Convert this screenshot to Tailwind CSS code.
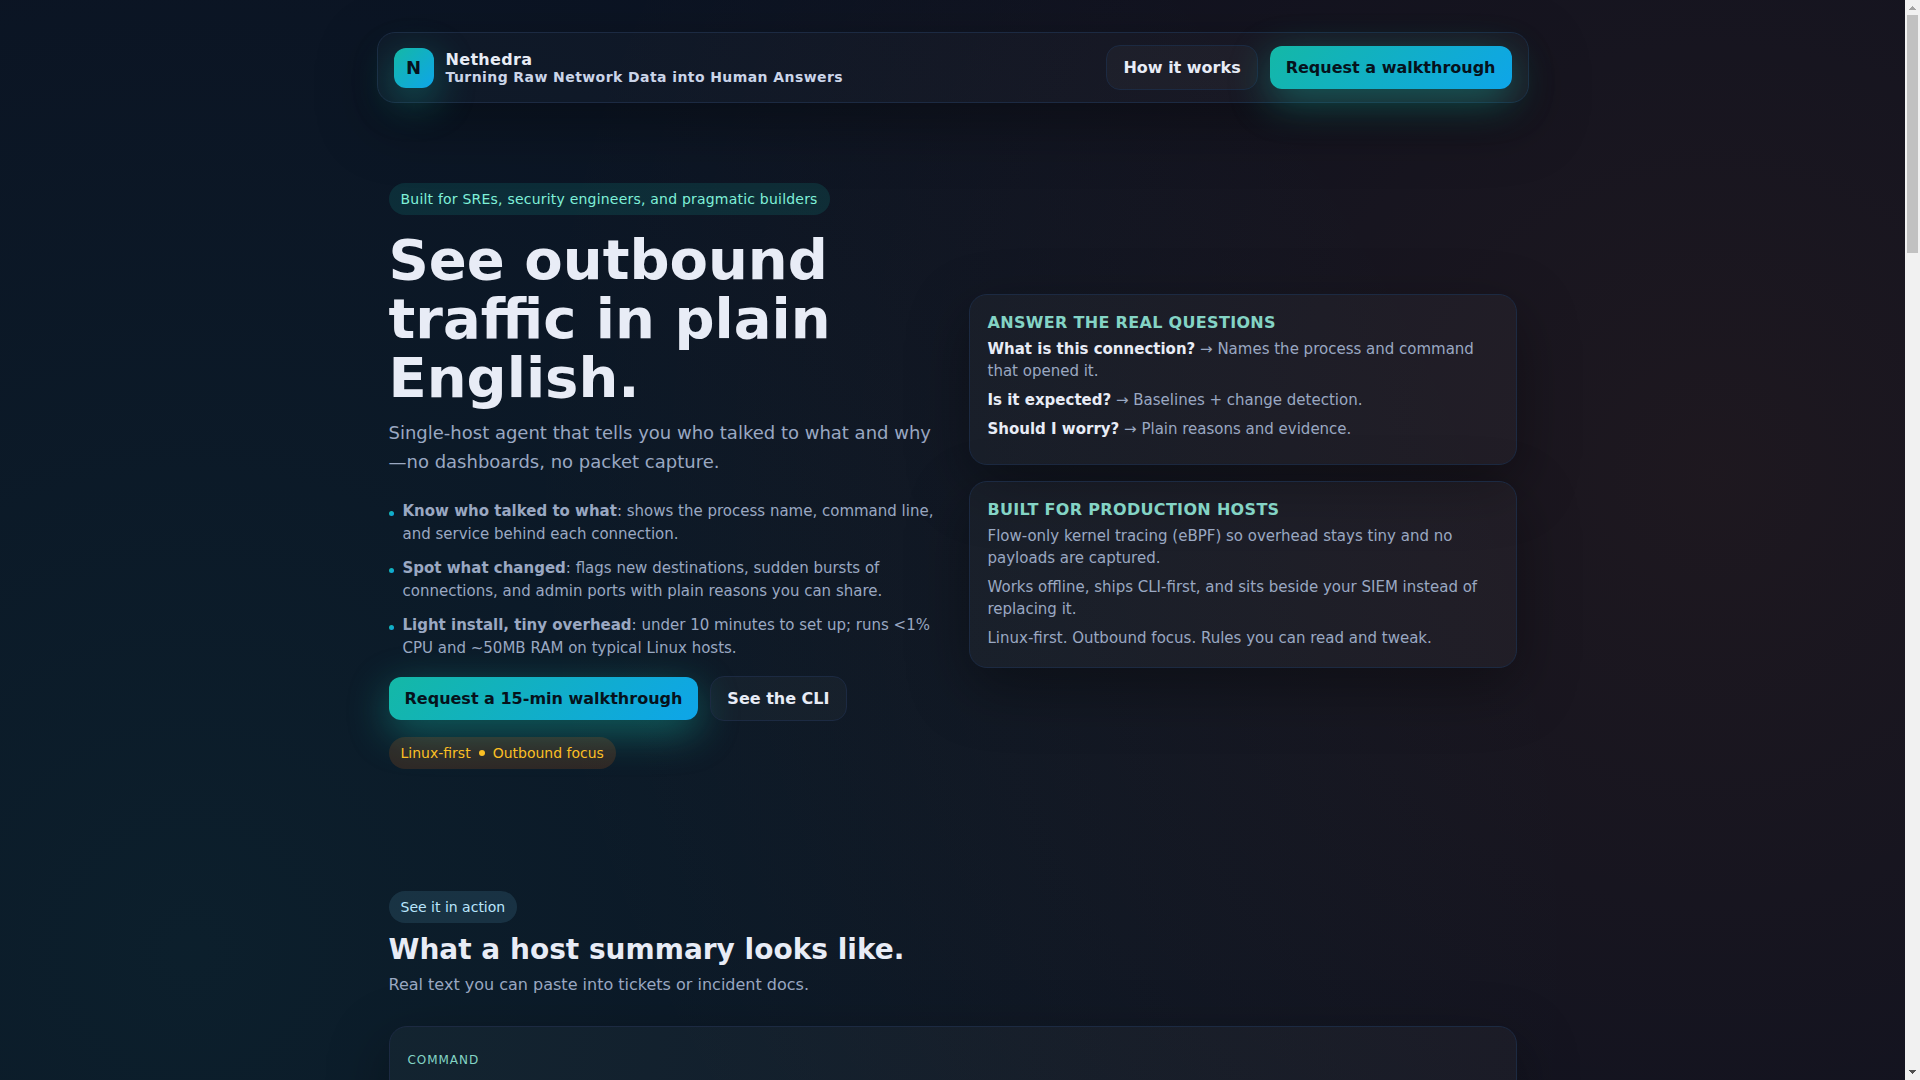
<!DOCTYPE html>
<html lang="en">
<head>
  <meta charset="UTF-8" />
  <meta name="viewport" content="width=device-width, initial-scale=1.0" />
  <title>Nethedra</title>
  <script src="https://cdn.jsdelivr.net/npm/@tailwindcss/browser@4"></script>
</head>
<body class="flex h-screen overflow-hidden bg-[#0b1020] font-['DejaVu_Sans',sans-serif] text-base text-[#e8ecf6]">

  <div class="min-w-0 flex-1 overflow-hidden bg-[radial-gradient(circle_1400px_at_10%_88%,rgba(20,184,166,0.09),rgba(20,184,166,0)),radial-gradient(circle_1200px_at_90%_44%,rgba(249,115,22,0.08),rgba(249,115,22,0))]">
    <div class="mx-auto max-w-[1200px] px-6 pt-8">

      <!-- Top bar -->
      <header class="flex items-center justify-between rounded-[18px] border border-[#1c2a42] bg-white/[0.02] px-4 py-3 shadow-[0_20px_60px_rgba(0,0,0,0.35)]">
        <div class="flex items-center gap-3">
          <div class="grid size-10 place-items-center rounded-xl bg-[linear-gradient(135deg,#14b8a6,#0ea5e9)] text-lg font-bold text-[#06121c] shadow-[0_12px_40px_rgba(20,184,166,0.45)]">N</div>
          <div class="font-bold tracking-[0.02em]">
            <div class="leading-[18px]">Nethedra</div>
            <div class="text-sm leading-4 tracking-[0.03em] text-[#cbd5e9]">Turning Raw Network Data into Human Answers</div>
          </div>
        </div>
        <nav class="flex items-center gap-3">
          <a href="#how" class="rounded-[14px] border border-[#1c2a42] bg-white/[0.03] px-4 py-3 leading-[19px] font-bold">How it works</a>
          <a href="#contact" class="rounded-xl bg-[linear-gradient(135deg,#14b8a6,#0ea5e9)] px-4 py-3 leading-[19px] font-bold text-[#06121c] shadow-[0_12px_40px_rgba(20,184,166,0.45)]">Request a walkthrough</a>
        </nav>
      </header>

      <main class="px-3 pt-6">

        <!-- Hero -->
        <section class="grid grid-cols-2 items-center gap-8 py-14">
          <div class="flex flex-col items-start pb-[10px]">
            <span class="rounded-full bg-[#14b8a6]/15 px-3 py-2 text-sm leading-4 tracking-[0.015em] text-[#7ff0d8]">Built for SREs, security engineers, and pragmatic builders</span>
            <h1 class="mt-[15px] text-[56px] leading-[59px] font-bold">See outbound traffic in plain English.</h1>
            <p class="mt-[11px] text-lg leading-[29px] text-[#9aa8c2]">Single-host agent that tells you who talked to what and why—no dashboards, no packet capture.</p>
            <ul class="mt-6 flex flex-col gap-[11px] text-[15px] leading-[23px] text-[#9aa8c2]">
              <li class="flex gap-[9px]">
                <span class="mt-[11px] size-[5px] shrink-0 rounded-full bg-[linear-gradient(135deg,#14b8a6,#0ea5e9)]"></span>
                <span><strong>Know who talked to what</strong>: shows the process name, command line, and service behind each connection.</span>
              </li>
              <li class="flex gap-[9px]">
                <span class="mt-[11px] size-[5px] shrink-0 rounded-full bg-[linear-gradient(135deg,#14b8a6,#0ea5e9)]"></span>
                <span><strong>Spot what changed</strong>: flags new destinations, sudden bursts of connections, and admin ports with plain reasons you can share.</span>
              </li>
              <li class="flex gap-[9px]">
                <span class="mt-[11px] size-[5px] shrink-0 rounded-full bg-[linear-gradient(135deg,#14b8a6,#0ea5e9)]"></span>
                <span><strong>Light install, tiny overhead</strong>: under 10 minutes to set up; runs &lt;1% CPU and ~50MB RAM on typical Linux hosts.</span>
              </li>
            </ul>
            <div class="mt-4 flex items-center gap-3">
              <a href="#contact" class="rounded-xl bg-[linear-gradient(135deg,#14b8a6,#0ea5e9)] px-4 py-3 leading-[19px] font-bold text-[#06121c] shadow-[0_12px_40px_rgba(20,184,166,0.45)]">Request a 15-min walkthrough</a>
              <a href="#cli" class="rounded-[14px] border border-[#1c2a42] bg-white/[0.03] px-4 py-3 leading-[19px] font-bold">See the CLI</a>
            </div>
            <span class="mt-4 flex items-center gap-2 rounded-full bg-[#f97316]/15 px-3 py-2 text-sm leading-4 text-[#fbbf24]">
              Linux-first
              <span class="size-1.5 rounded-full bg-[#fbbf24]"></span>
              Outbound focus
            </span>
          </div>

          <div class="flex flex-col gap-4">
            <article class="rounded-[18px] border border-[#1c2a42] bg-white/[0.03] px-[18px] pt-[18px] pb-6 shadow-[0_20px_60px_rgba(0,0,0,0.35)]">
              <h3 class="leading-[19px] font-bold tracking-[0.02em] text-[#84d4c5] uppercase">Answer the real questions</h3>
              <div class="mt-1.5 flex flex-col gap-[7px] text-[15px] leading-[22px] text-[#9aa8c2]">
                <p><strong class="text-[#e8ecf6]">What is this connection?</strong> → Names the process and command that opened it.</p>
                <p><strong class="text-[#e8ecf6]">Is it expected?</strong> → Baselines + change detection.</p>
                <p><strong class="text-[#e8ecf6]">Should I worry?</strong> → Plain reasons and evidence.</p>
              </div>
            </article>
            <article class="rounded-[18px] border border-[#1c2a42] bg-white/[0.03] p-[18px] shadow-[0_20px_60px_rgba(0,0,0,0.35)]">
              <h3 class="leading-[19px] font-bold tracking-[0.02em] text-[#84d4c5] uppercase">Built for production hosts</h3>
              <div class="mt-1.5 flex flex-col gap-[7px] text-[15px] leading-[22px] text-[#9aa8c2]">
                <p>Flow-only kernel tracing (eBPF) so overhead stays tiny and no payloads are captured.</p>
                <p>Works offline, ships CLI-first, and sits beside your SIEM instead of replacing it.</p>
                <p>Linux-first. Outbound focus. Rules you can read and tweak.</p>
              </div>
            </article>
          </div>
        </section>

        <!-- Host summary -->
        <section id="cli" class="flex flex-col items-start py-14">
          <span class="rounded-full bg-[#7dd3fc]/12 px-3 py-2 text-sm leading-4 text-[#bae6fd]">See it in action</span>
          <h2 class="mt-[10px] text-[28px] leading-[34px] font-bold">What a host summary looks like.</h2>
          <p class="mt-[5px] leading-[26px] text-[#9aa8c2]">Real text you can paste into tickets or incident docs.</p>
          <div class="mt-7 w-full rounded-[18px] border border-[#1c2a42] bg-white/[0.03] px-[18px] pt-[26px] pb-[18px] shadow-[0_20px_60px_rgba(0,0,0,0.35)]">
            <div class="pb-6 text-xs leading-[14px] tracking-[0.08em] text-[#84d4c5] uppercase">Command</div>
          </div>
        </section>
      </main>
    </div>
  </div>

  <!-- Scrollbar -->
  <div class="flex w-[15px] shrink-0 flex-col items-center bg-[#f1f1f1]" aria-hidden="true">
    <svg class="h-[15px] w-[15px] shrink-0" viewBox="0 0 15 15" shape-rendering="crispEdges"><path d="M7 6h1v1h1v1h1v1h1v1H4V9h1V8h1V7h1z" fill="#a3a3a3"/></svg>
    <div class="h-[22%] w-[11px] bg-[#c1c1c1]"></div>
    <svg class="mt-auto h-[15px] w-[15px] shrink-0" viewBox="0 0 15 15" shape-rendering="crispEdges"><path d="M4 5h7v1h-1v1H9v1H8v1H7V8H6V7H5V6H4z" fill="#505050"/></svg>
  </div>

</body>
</html>
